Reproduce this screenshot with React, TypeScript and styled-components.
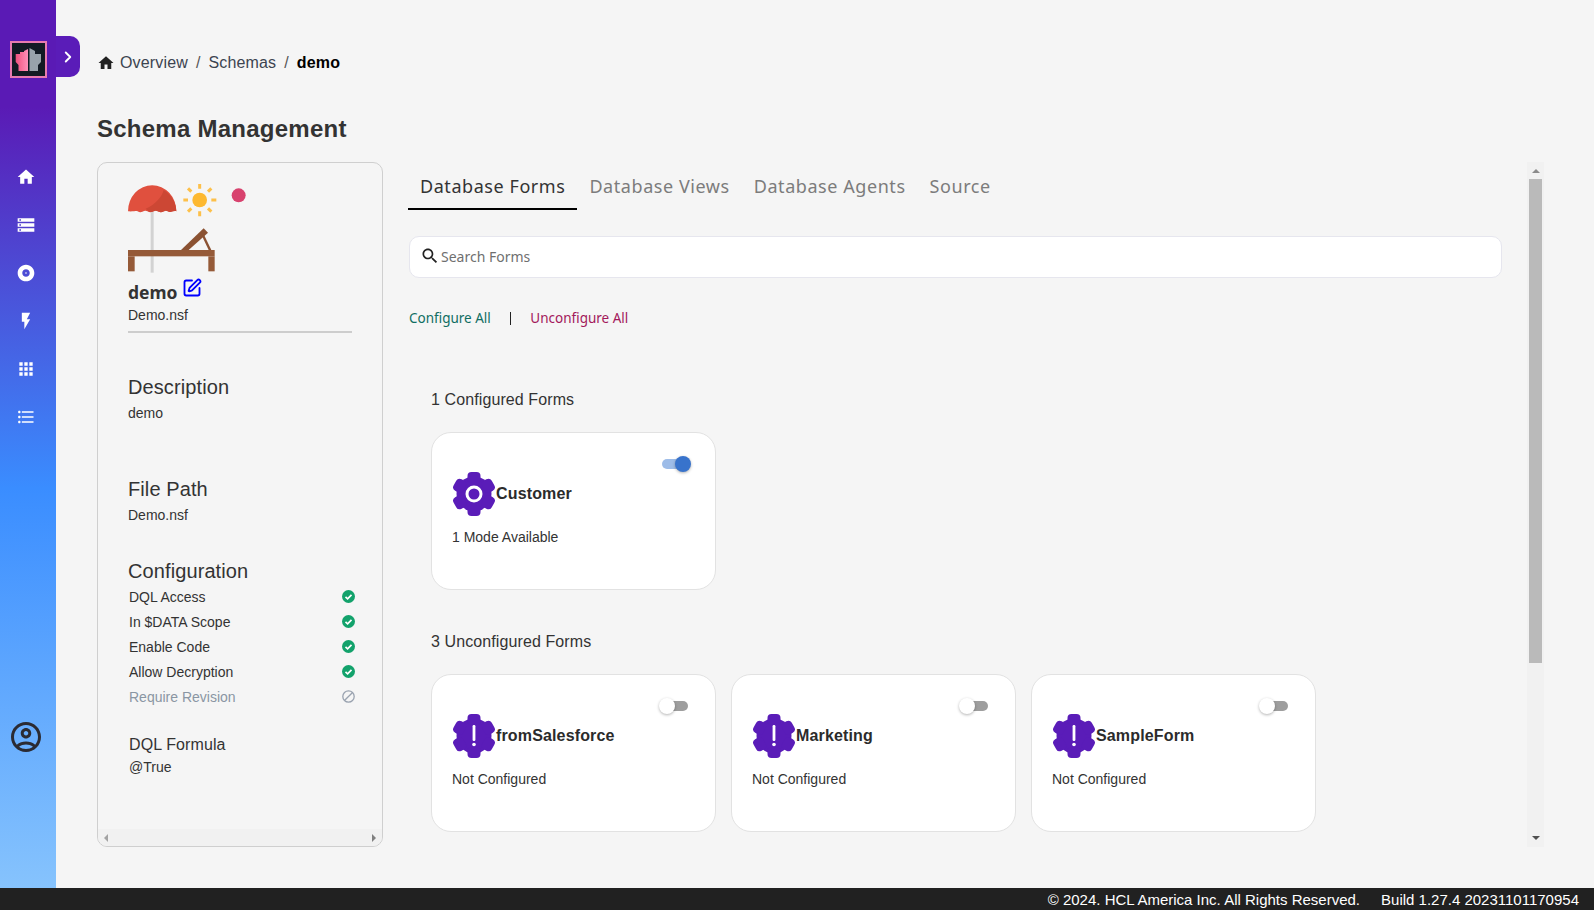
import React from 'react'
import styled, { createGlobalStyle } from 'styled-components'
import { ChevronRight, SquarePen } from 'lucide-react'

const ARIAL = '"Liberation Sans", Arial, sans-serif'
const HUMANIST = '"Noto Sans", "Open Sans", sans-serif'
const PURPLE = '#5a1cb8'

const navIcons = [
  'M10 20v-6h4v6h5v-8h3L12 3 2 12h3v8z',
  'M2 20h20v-4H2v4zm2-3h2v2H4v-2zM2 4v4h20V4H2zm4 3H4V5h2v2zm-4 7h20v-4H2v4zm2-3h2v2H4v-2z',
  'M12 2C6.48 2 2 6.48 2 12s4.48 10 10 10 10-4.48 10-10S17.52 2 12 2zm0 14.5c-2.49 0-4.5-2.01-4.5-4.5S9.51 7.5 12 7.5s4.5 2.01 4.5 4.5-2.01 4.5-4.5 4.5zm0-5.5c-.55 0-1 .45-1 1s.45 1 1 1 1-.45 1-1-.45-1-1-1z',
  'M7 2v11h3v9l7-12h-4l4-8z',
  'M4 8h4V4H4v4zm6 12h4v-4h-4v4zm-6 0h4v-4H4v4zm0-6h4v-4H4v4zm6 0h4v-4h-4v4zm6-10v4h4V4h-4zm-6 4h4V4h-4v4zm6 6h4v-4h-4v4zm0 6h4v-4h-4v4z',
  'M4 10.5c-.83 0-1.5.67-1.5 1.5s.67 1.5 1.5 1.5 1.5-.67 1.5-1.5-.67-1.5-1.5-1.5zm0-6c-.83 0-1.5.67-1.5 1.5S3.17 7.5 4 7.5 5.5 6.83 5.5 6 4.83 4.5 4 4.5zm0 12c-.83 0-1.5.68-1.5 1.5s.68 1.5 1.5 1.5 1.5-.68 1.5-1.5-.67-1.5-1.5-1.5zM7 19h14v-2H7v2zm0-6h14v-2H7v2zm0-8v2h14V5H7z',
]

const USER_ICON =
  'M12 2C6.48 2 2 6.48 2 12s4.48 10 10 10 10-4.48 10-10S17.52 2 12 2zM7.35 18.5C8.66 17.56 10.26 17 12 17s3.34.56 4.65 1.5c-1.31.94-2.91 1.5-4.65 1.5s-3.34-.56-4.65-1.5zm10.79-1.38C16.45 15.8 14.32 15 12 15s-4.45.8-6.14 2.12C4.7 15.73 4 13.95 4 12c0-4.42 3.58-8 8-8s8 3.58 8 8c0 1.95-.7 3.73-1.86 5.12zM12 6c-1.93 0-3.5 1.57-3.5 3.5S10.07 13 12 13s3.5-1.57 3.5-3.5S13.93 6 12 6zm0 5c-.83 0-1.5-.67-1.5-1.5S11.17 8 12 8s1.5.67 1.5 1.5S12.83 11 12 11z'

const SEARCH_ICON =
  'M15.5 14h-.79l-.28-.27C15.41 12.59 16 11.11 16 9.5 16 5.91 13.09 3 9.5 3S3 5.91 3 9.5 5.91 16 9.5 16c1.61 0 3.09-.59 4.23-1.57l.27.28v.79l5 4.99L20.49 19l-4.99-5zm-6 0C7.01 14 5 11.99 5 9.5S7.01 5 9.5 5 14 7.01 14 9.5 11.99 14 9.5 14z'

const configRows = [
  { label: 'DQL Access', ok: true },
  { label: 'In $DATA Scope', ok: true },
  { label: 'Enable Code', ok: true },
  { label: 'Allow Decryption', ok: true },
  { label: 'Require Revision', ok: false },
]

const unconfigured = ['fromSalesforce', 'Marketing', 'SampleForm']

const GlobalStyle = createGlobalStyle`
  html, body {
    margin: 0;
    padding: 0;
    background: #f5f5f5;
    font-family: ${ARIAL};
    color: #333;
  }
  * { box-sizing: border-box; }
`

const Page = styled.div`
  width: 1594px;
  height: 910px;
  display: flex;
  flex-direction: column;
  overflow: hidden;
`

const Body = styled.div`
  flex: 1;
  min-height: 0;
  display: flex;
`

const Sidebar = styled.aside`
  position: relative;
  width: 56px;
  flex: none;
  padding: 41px 5px 0 0;
  display: flex;
  flex-direction: column;
  align-items: center;
  background: linear-gradient(180deg, #5a1ab5 0%, #5a1ab5 12%, #3a8dff 55%, #86c3fd 100%);
`

const LogoBox = styled.div`
  width: 37px;
  height: 37px;
  margin-left: 6px;
  border: 2px solid #e87ab0;
  background: #121a24;
  display: flex;
`

const ExpandTab = styled.div`
  position: absolute;
  left: 56px;
  top: 36px;
  width: 24px;
  height: 41px;
  background: ${PURPLE};
  border-radius: 0 10px 10px 0;
  color: #fff;
  display: flex;
  align-items: center;
  justify-content: center;
`

const NavList = styled.nav`
  margin-top: 75px;
  display: flex;
  flex-direction: column;
`

const NavItem = styled.div`
  height: 48px;
  display: flex;
  align-items: center;
  justify-content: center;
  color: #fff;
`

const UserButton = styled.div`
  margin-top: 278px;
  width: 36px;
  height: 36px;
  color: #2b2b33;
`

const Main = styled.main`
  flex: 1;
  min-width: 0;
  padding: 51px 50px 41px 41px;
  display: flex;
  flex-direction: column;
`

const Breadcrumb = styled.div`
  height: 24px;
  display: flex;
  align-items: center;
  font-size: 16px;
  letter-spacing: 0.15px;
  color: #3c4450;
`

const CrumbHome = styled.span`
  width: 18px;
  height: 18px;
  margin: 0 5px 0 0;
  color: #222;
  display: flex;
`

const CrumbSep = styled.span`
  margin: 0 8px;
  color: #555;
`

const CrumbCurrent = styled.b`
  color: #000;
`

const Title = styled.h1`
  margin: 39px 0 0;
  font-size: 24px;
  line-height: 30px;
  font-weight: 700;
  letter-spacing: 0.25px;
  color: #333;
`

const Content = styled.div`
  flex: 1;
  min-height: 0;
  margin-top: 18px;
  display: flex;
`

const LeftPanel = styled.section`
  width: 286px;
  flex: none;
  border: 1px solid #cfcfcf;
  border-radius: 10px;
  overflow: hidden;
  display: flex;
  flex-direction: column;
`

const PanelBody = styled.div`
  flex: 1;
  min-height: 0;
  padding: 21px 0 0 30px;
`

const Illustration = styled.svg`
  display: block;
  width: 125px;
  height: 90px;
`

const NameRow = styled.div`
  margin-top: 6px;
  height: 24px;
  display: flex;
  align-items: center;
  gap: 4px;
  font-family: ${HUMANIST};
  font-size: 17.5px;
  font-weight: 700;
  color: #333;
`

const EditIcon = styled.span`
  display: flex;
  color: #0000ff;
  margin-top: -8px;
`

const SmallText = styled.div<{ $top: number }>`
  margin-top: ${(p) => p.$top}px;
  font-size: 14px;
  line-height: 18px;
  color: #333;
`

const Divider = styled.div`
  margin-top: 7px;
  width: 224px;
  height: 2px;
  background: #cdcdcd;
`

const SectionTitle = styled.div<{ $top: number }>`
  margin-top: ${(p) => p.$top}px;
  font-size: 20px;
  line-height: 24px;
  letter-spacing: 0.1px;
  color: #333;
`

const ConfigList = styled.div`
  margin-top: 1px;
  width: 226.5px;
`

const ConfigRow = styled.div<{ $ok: boolean }>`
  height: 25px;
  padding-left: 1px;
  display: flex;
  align-items: center;
  justify-content: space-between;
  font-size: 14px;
  color: ${(p) => (p.$ok ? '#333' : '#8a96a3')};
`

const FormulaTitle = styled.div`
  margin-top: 25px;
  padding-left: 1px;
  font-size: 16px;
  line-height: 22px;
  letter-spacing: 0.1px;
  color: #333;
`

const FormulaValue = styled(SmallText)`
  padding-left: 1px;
`

const HScroll = styled.div`
  height: 17px;
  flex: none;
  background: #f1f1f1;
  display: flex;
  align-items: center;
  justify-content: space-between;
  padding: 0 6px;
`

const ArrowLeft = styled.span`
  width: 0;
  height: 0;
  border-top: 4px solid transparent;
  border-bottom: 4px solid transparent;
  border-right: 4px solid #a3a3a3;
`

const ArrowRight = styled.span`
  width: 0;
  height: 0;
  border-top: 4px solid transparent;
  border-bottom: 4px solid transparent;
  border-left: 4px solid #808080;
`

const RightPanel = styled.section`
  flex: 1;
  min-width: 0;
  display: flex;
  flex-direction: column;
`

const Tabs = styled.div`
  margin-left: 25px;
  height: 48px;
  display: flex;
`

const Tab = styled.div<{ $active?: boolean }>`
  padding: 0 12px;
  height: 48px;
  line-height: 48px;
  font-family: ${HUMANIST};
  font-size: 18px;
  letter-spacing: 0.56px;
  color: ${(p) => (p.$active ? '#333' : '#7c7c7c')};
  border-bottom: 2px solid ${(p) => (p.$active ? '#000' : 'transparent')};
`

const SearchBox = styled.div`
  margin: 26px 0 0 26px;
  width: 1093px;
  height: 42px;
  flex: none;
  background: #fff;
  border: 1px solid #e6e6ee;
  border-radius: 10px;
  display: flex;
  align-items: center;
  padding: 0 0 2px 10px;
  gap: 1px;
  font-family: ${HUMANIST};
  font-size: 14px;
  color: #6f6f6f;
`

const SearchIcon = styled.svg`
  width: 20px;
  height: 20px;
  fill: #222;
`

const Actions = styled.div`
  margin: 30px 0 0 26px;
  height: 20px;
  display: flex;
  align-items: center;
  font-family: ${HUMANIST};
  font-size: 13.5px;
`

const ConfigureLink = styled.span`
  color: #0f6e62;
`

const UnconfigureLink = styled.span`
  color: #a3195b;
`

const ActionSep = styled.span`
  width: 1.5px;
  height: 13px;
  margin: 0 19px;
  background: #222;
`

const GroupTitle = styled.div<{ $top: number }>`
  margin: ${(p) => p.$top}px 0 0 48px;
  font-size: 16px;
  line-height: 22px;
  letter-spacing: 0.1px;
  color: #333;
`

const CardRow = styled.div<{ $top: number }>`
  margin: ${(p) => p.$top}px 0 0 48px;
  display: flex;
  gap: 15px;
`

const Card = styled.div`
  position: relative;
  width: 285px;
  height: 158px;
  background: #fff;
  border: 1px solid #e2e2e2;
  border-radius: 20px;
  padding: 39px 0 0 20px;
`

const CardHead = styled.div`
  display: flex;
  align-items: center;
  font-size: 16px;
  font-weight: 700;
  letter-spacing: 0.15px;
  color: #2b2b2b;
`

const CardText = styled.div`
  margin-top: 12px;
  font-size: 14px;
  line-height: 18px;
  color: #333;
`

const Toggle = styled.div<{ $on: boolean }>`
  position: absolute;
  top: 26px;
  left: ${(p) => (p.$on ? 230 : 228)}px;
  width: 28px;
  height: 10px;
  border-radius: 5px;
  background: ${(p) => (p.$on ? '#9dbce8' : '#9e9e9e')};
`

const Knob = styled.span<{ $on: boolean }>`
  position: absolute;
  top: -3px;
  left: ${(p) => (p.$on ? 13 : -1)}px;
  width: 16px;
  height: 16px;
  border-radius: 50%;
  background: ${(p) => (p.$on ? '#3873cc' : '#fff')};
  box-shadow: 0 1px 3px rgba(0, 0, 0, 0.3);
`

const VScroll = styled.div`
  width: 17px;
  flex: none;
  background: #f1f1f1;
  display: flex;
  flex-direction: column;
  align-items: center;
  padding-top: 17px;
  position: relative;
`

const VThumb = styled.div`
  width: 13px;
  height: 484px;
  background: #bababa;
`

const ArrowUp = styled.span`
  position: absolute;
  top: 7px;
  border-left: 4px solid transparent;
  border-right: 4px solid transparent;
  border-bottom: 4px solid #8a8a8a;
`

const ArrowDown = styled.span`
  position: absolute;
  bottom: 7px;
  border-left: 4px solid transparent;
  border-right: 4px solid transparent;
  border-top: 4px solid #505050;
`

const Footer = styled.footer`
  height: 22px;
  flex: none;
  background: #212121;
  color: #fff;
  font-size: 15px;
  display: flex;
  align-items: center;
  justify-content: flex-end;
  gap: 21px;
  padding-right: 15px;
`

const Icon = ({ d, size }: { d: string; size: number }) => (
  <svg width={size} height={size} viewBox="0 0 24 24" fill="currentColor">
    <path d={d} fillRule="evenodd" />
  </svg>
)

const Logo = () => (
  <svg width="33" height="33" viewBox="2 2 33 33">
    <defs>
      <linearGradient id="logoPink" x1="0" x2="1" y1="0" y2="0">
        <stop offset="0" stopColor="#f0527f" />
        <stop offset="1" stopColor="#ff8fb8" />
      </linearGradient>
    </defs>
    <path d="M18 8v22H8.5v-6l-2.8-3v-8H10v-2h4v-1z" fill="url(#logoPink)" />
    <path d="M19.5 7l5.500 3v3H31v8l-3 3v6h-8.500z" fill="#98a2ab" />
  </svg>
)

const Gear = ({ warn }: { warn?: boolean }) => (
  <svg width="44" height="44" viewBox="0 0 44 44">
    <circle cx="22" cy="22" r="17.500" fill={PURPLE} />
    {[0, 60, 120, 180, 240, 300].map((a) => (
      <rect key={a} x="15.500" y="0" width="13" height="11" rx="4" fill={PURPLE} transform={`rotate(${a} 22 22)`} />
    ))}
    {warn ? (
      <>
        <rect x="20.600" y="11" width="2.800" height="16" rx="1.200" fill="#fff" />
        <circle cx="22" cy="30.500" r="1.800" fill="#fff" />
      </>
    ) : (
      <circle cx="22" cy="22" r="7" fill="none" stroke="#fff" strokeWidth="3" />
    )}
  </svg>
)

const BeachArt = () => (
  <Illustration viewBox="115 70 375 270">
    <rect x="183" y="150" width="9" height="186" fill="#d2d2d2" />
    <path
      d="M115 152a72 78 0 0 1 145 0c-8-4-14 1-18 2-6 1-10-5-16-3-6 1-9 5-15 3-6-1-10-5-16-3-6 1-10 5-16 3-5-1-9-5-15-3-5 1-9 5-15 3-5-1-8-4-15-2-6 0-12 1-19-0z"
      fill="#e0503e"
    />
    <path d="M168 144c30-12 50-38 54-56 24 14 38 40 38 64-6-3-12 2-18 2-6 1-10-5-16-3-6 1-9 5-15 3-6-1-10-5-16-3-6 1-10 4-16 3z" fill="#cc4734" />
    <circle cx="330" cy="118" r="22" fill="#fdb82f" />
    <g stroke="#fdc04a" strokeWidth="9">
      <path d="M330 69v15M330 152v15M281 118h14M365 118h15M295 83l10 10M355 143l10 10M365 83l-10 10M305 143l-10 10" />
    </g>
    <circle cx="447" cy="104" r="21" fill="#d8426e" />
    <rect x="115" y="268" width="260" height="19" fill="#955a38" />
    <rect x="115" y="287" width="20" height="45" fill="#955a38" />
    <rect x="356" y="287" width="19" height="45" fill="#955a38" />
    <path d="M274 268l68-65 13 13-58 52z" fill="#8b5232" />
    <path d="M337 226l6-4 22 46h-8z" fill="#8b5232" />
  </Illustration>
)

const StatusIcon = ({ ok }: { ok: boolean }) =>
  ok ? (
    <svg width="13" height="13" viewBox="0 0 13 13">
      <circle cx="6.500" cy="6.500" r="6.500" fill="#12a26b" />
      <path d="M3.500 6.800l2.100 2 3.900-4" fill="none" stroke="#fff" strokeWidth="1.700" />
    </svg>
  ) : (
    <svg width="13" height="13" viewBox="0 0 13 13">
      <circle cx="6.500" cy="6.500" r="5.700" fill="none" stroke="#9aa3b0" strokeWidth="1.300" />
      <path d="M2.700 10.300l7.600-7.600" stroke="#9aa3b0" strokeWidth="1.300" />
    </svg>
  )

const FormCard = ({ name, text, on }: { name: string; text: string; on: boolean }) => (
  <Card>
    <Toggle $on={on}>
      <Knob $on={on} />
    </Toggle>
    <CardHead>
      <Gear warn={!on} />
      {name}
    </CardHead>
    <CardText>{text}</CardText>
  </Card>
)

const App = () => (
  <Page>
    <GlobalStyle />
    <Body>
      <Sidebar>
        <LogoBox>
          <Logo />
        </LogoBox>
        <ExpandTab>
          <ChevronRight size={18} strokeWidth={2.5} />
        </ExpandTab>
        <NavList>
          {navIcons.map((d, i) => (
            <NavItem key={i}>
              <Icon d={d} size={20} />
            </NavItem>
          ))}
        </NavList>
        <UserButton>
          <Icon d={USER_ICON} size={36} />
        </UserButton>
      </Sidebar>
      <Main>
        <Breadcrumb>
          <CrumbHome>
            <Icon d={navIcons[0]} size={18} />
          </CrumbHome>
          Overview
          <CrumbSep>/</CrumbSep>
          Schemas
          <CrumbSep>/</CrumbSep>
          <CrumbCurrent>demo</CrumbCurrent>
        </Breadcrumb>
        <Title>Schema Management</Title>
        <Content>
          <LeftPanel>
            <PanelBody>
              <BeachArt />
              <NameRow>
                demo
                <EditIcon>
                  <SquarePen size={20} strokeWidth={2.2} />
                </EditIcon>
              </NameRow>
              <SmallText $top={2}>Demo.nsf</SmallText>
              <Divider />
              <SectionTitle $top={42}>Description</SectionTitle>
              <SmallText $top={5}>demo</SmallText>
              <SectionTitle $top={55}>File Path</SectionTitle>
              <SmallText $top={5}>Demo.nsf</SmallText>
              <SectionTitle $top={35}>Configuration</SectionTitle>
              <ConfigList>
                {configRows.map((r) => (
                  <ConfigRow key={r.label} $ok={r.ok}>
                    {r.label}
                    <StatusIcon ok={r.ok} />
                  </ConfigRow>
                ))}
              </ConfigList>
              <FormulaTitle>DQL Formula</FormulaTitle>
              <FormulaValue $top={2}>@True</FormulaValue>
            </PanelBody>
            <HScroll>
              <ArrowLeft />
              <ArrowRight />
            </HScroll>
          </LeftPanel>
          <RightPanel>
            <Tabs>
              <Tab $active>Database Forms</Tab>
              <Tab>Database Views</Tab>
              <Tab>Database Agents</Tab>
              <Tab>Source</Tab>
            </Tabs>
            <SearchBox>
              <SearchIcon viewBox="0 0 24 24">
                <path d={SEARCH_ICON} />
              </SearchIcon>
              Search Forms
            </SearchBox>
            <Actions>
              <ConfigureLink>Configure All</ConfigureLink>
              <ActionSep />
              <UnconfigureLink>Unconfigure All</UnconfigureLink>
            </Actions>
            <GroupTitle $top={61}>1 Configured Forms</GroupTitle>
            <CardRow $top={21}>
              <FormCard name="Customer" text="1 Mode Available" on />
            </CardRow>
            <GroupTitle $top={41}>3 Unconfigured Forms</GroupTitle>
            <CardRow $top={21}>
              {unconfigured.map((n) => (
                <FormCard key={n} name={n} text="Not Configured" on={false} />
              ))}
            </CardRow>
          </RightPanel>
          <VScroll>
            <ArrowUp />
            <VThumb />
            <ArrowDown />
          </VScroll>
        </Content>
      </Main>
    </Body>
    <Footer>
      <span>© 2024. HCL America Inc. All Rights Reserved.</span>
      <span>Build 1.27.4 20231101170954</span>
    </Footer>
  </Page>
)

export default App
